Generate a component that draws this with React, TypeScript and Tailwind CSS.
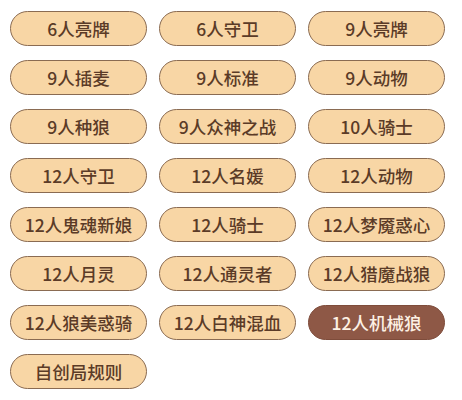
import { useState } from 'react';

const modes = [
  '6人亮牌', '6人守卫', '9人亮牌',
  '9人插麦', '9人标准', '9人动物',
  '9人种狼', '9人众神之战', '10人骑士',
  '12人守卫', '12人名媛', '12人动物',
  '12人鬼魂新娘', '12人骑士', '12人梦魇惑心',
  '12人月灵', '12人通灵者', '12人猎魔战狼',
  '12人狼美惑骑', '12人白神混血', '12人机械狼',
  '自创局规则',
];

export default function App() {
  const [active, setActive] = useState('12人机械狼');

  return (
    <div className="w-[462px] h-[400px] bg-white pl-[10px] pt-[11px] font-['Noto_Sans_CJK_SC',sans-serif]">
      <div className="grid grid-cols-[repeat(3,137px)] gap-x-[12px] gap-y-[14px]">
        {modes.map((m) => {
          const on = m === active;
          return (
            <button
              key={m}
              onClick={() => setActive(m)}
              className={`h-[35px] rounded-full border text-[17.5px] font-medium leading-none flex items-center justify-center ${
                on
                  ? 'bg-[#8e5846] border-[#7e4c3b] text-[#fdf1e4]'
                  : 'bg-[#f8d6a5] border-[#8a6b52] text-[#5b3b27]'
              }`}
            >
              {m}
            </button>
          );
        })}
      </div>
    </div>
  );
}
